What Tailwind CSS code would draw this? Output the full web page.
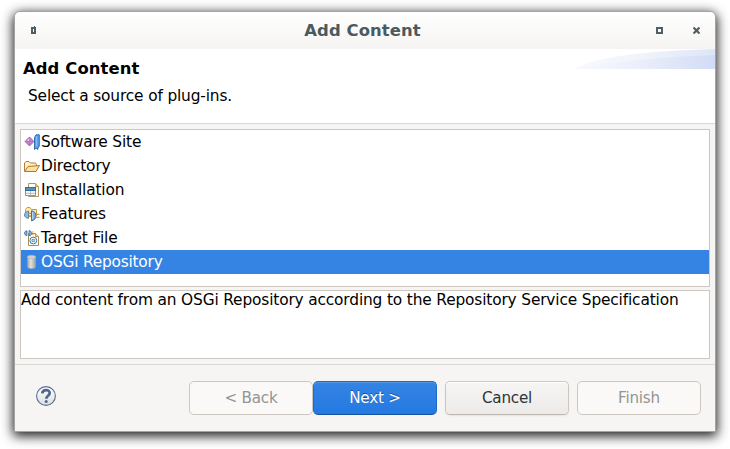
<!DOCTYPE html>
<html lang="en">
<head>
<meta charset="utf-8">
<title>Add Content</title>
<script src="https://cdn.jsdelivr.net/npm/@tailwindcss/browser@4"></script>
</head>
<body class="w-[730px] h-[449px] overflow-hidden bg-white pl-[14px] pt-[11px] font-['DejaVu_Sans',sans-serif] text-[15.4px] tracking-[-0.16px] text-black">
<main class="w-[702px] h-[421px] flex flex-col border border-[#a2a3a2] rounded-t-[6px] bg-[#f6f5f4] shadow-[0_3px_12px_1px_rgba(0,0,0,0.9)] overflow-hidden">
  <header class="h-[37px] shrink-0 flex items-center bg-linear-to-b from-white to-[#f5f4f2] text-[#4a5a60] px-[16px]">
    <svg class="w-[5px] h-[8px] -mt-px" viewBox="0 0 5 8" shape-rendering="crispEdges"><path fill="#505f66" fill-rule="evenodd" d="M3 0h1v1h1v7H0V1h3zM2 3v3h1V3z"/></svg>
    <h1 class="flex-1 text-center font-bold text-[16.4px] leading-[25px] tracking-[0.1px] pl-[33px]">Add Content</h1>
    <svg class="w-[7px] h-[7px] mr-[30px]" viewBox="0 0 7 7" shape-rendering="crispEdges"><path fill="#505f66" fill-rule="evenodd" d="M0 0h7v7H0zM2 2v3h3V2z"/></svg>
    <svg class="w-[7px] h-[7px] -mr-[1px]" viewBox="0 0 7 7"><path stroke="#505f66" stroke-width="2.2" d="M.5.5l6 6M6.5.5l-6 6"/></svg>
  </header>
  <section class="h-[75px] shrink-0 flex justify-between bg-white border-b border-[#dad8d5]">
    <div class="pl-[8px] pt-[10px]">
      <h2 class="font-bold text-[16.4px] tracking-[0.1px] leading-[20px]">Add Content</h2>
      <p class="pl-[5px] mt-[8px] leading-[19px]">Select a source of plug-ins.</p>
    </div>
    <svg class="w-[142px] h-[20px]" viewBox="0 0 142 20"><defs><linearGradient id="a"><stop stop-color="#f8faff"/><stop offset=".5" stop-color="#f0f3fb"/><stop offset="1" stop-color="#dce5f8"/></linearGradient><linearGradient id="b"><stop stop-color="#f8faff"/><stop offset=".45" stop-color="#eceffa"/><stop offset="1" stop-color="#d2dcf6"/></linearGradient></defs><path fill="url(#a)" d="M1 20C22 8 70 2 142 0v20z"/><path fill="url(#b)" d="M1 20C35 13 85 8 142 6v14z"/></svg>
  </section>
  <section class="h-[240px] shrink-0 px-[5px] pt-[5px] flex flex-col gap-[3px]">
    <ul class="h-[158px] border border-[#cdc7c2] bg-white leading-[24px]">
      <li class="h-6 flex items-center pl-[3px] gap-px"><svg class="w-4 h-4" viewBox="0 0 16 16"><path d="M1 7.5L5.5 3 10 7.5 5.5 12z" fill="#c684cc" stroke="#93529b" stroke-width=".8"/><path d="M3 6.5L5.5 4v3z" fill="#f4d8f5"/><path d="M5.5 3.5v8M2 7.5h7" stroke="#a866b1" stroke-width=".5"/><path d="M10.5 3.5L12 .8h3.3v11.2L14 14.2v1.2l-2-1.4-1.5 1.5z" fill="#56a2ec" stroke="#2563ab" stroke-width=".9"/><path d="M12.5 2v10" stroke="#83bff8"/></svg><span>Software Site</span></li>
      <li class="h-6 flex items-center pl-[3px] gap-px"><svg class="w-4 h-4" viewBox="0 0 16 16"><path d="M.5 13V5L2 3.5h3L6.5 5h5l1 1.5V8" fill="#fff1bd" stroke="#b47d3c"/><path d="M.5 13.5L4 8.5l11.5-1-3.5 6z" fill="#ffe1a0" stroke="#ad7434"/></svg><span>Directory</span></li>
      <li class="h-6 flex items-center pl-[3px] gap-px"><svg class="w-4 h-4" viewBox="0 0 16 16"><path d="M4.5 1.5h7l3 3v10h-10z" fill="#fffdf0" stroke="#a8986f"/><path d="M11.5 1.5v3h3" fill="#e8cd8b" stroke="#b79a60"/><path d="M1.5 5.5h10v8h-10z" fill="#fafcfc" stroke="#8393a0"/><path d="M1 5h11v4H1z" fill="#356f9e"/><path d="M2 7h9" stroke="#76b5df"/><path d="M2 11.3h9M6.5 9v4.5" stroke="#b1bcbc"/></svg><span>Installation</span></li>
      <li class="h-6 flex items-center pl-[3px] gap-px"><svg class="w-4 h-4" viewBox="0 0 16 16"><path d="M1.5 10V3.5L3 1.5h3l1.5 2h5v6z" fill="#ffe9aa" stroke="#c59a4c"/><path d="M4.5 5.2C2 5.5.5 7 .5 9s1.5 3 4 3.3z" fill="#8ebae0" stroke="#3d71a9" stroke-width=".8"/><path d="M4.5 7.3h3M4.5 10.3h3" stroke="#d19739" stroke-width="1.3"/><path d="M7.5 4.8v10c2.7-.3 4.5-2.4 4.5-5.1s-1.8-4.6-4.5-4.9z" fill="#78a9d9" stroke="#3567a2" stroke-width=".9"/><path d="M8.7 6v7" stroke="#c4e0f9"/><path d="M12 8.3h3.5M12 11.3h3.5" stroke="#d39a36" stroke-width="1.3"/></svg><span>Features</span></li>
      <li class="h-6 flex items-center pl-[3px] gap-px"><svg class="w-4 h-4" viewBox="0 0 16 16"><path d="M4.5 3.5h7l3 3v9h-10z" fill="#fffdf1" stroke="#a88e5b"/><path d="M11.5 3.5v3h3" fill="#edd7a0" stroke="#b79355"/><path d="M3 .8C1 1 .5 2 .5 3.2S1.5 5.5 3 5.7zM5 .5v5.3c2 0 2.7-1.2 2.7-2.6S6.5.8 5 .5z" fill="#80acda" stroke="#3d71a9" stroke-width=".8"/><path d="M7.5 2h2M7.5 4.3h2" stroke="#d19b3f"/><circle cx="9.3" cy="10.5" r="3.4" fill="#eff9ff" stroke="#3d79a9"/><circle cx="9.3" cy="10.5" r="1.7" fill="#337eb3"/><path d="M9.3 9v3M7.8 10.5h3" stroke="#b8e3f5" stroke-width=".7"/></svg><span>Target File</span></li>
      <li class="h-6 flex items-center pl-[3px] gap-px bg-[#3584e4] text-white"><svg class="w-4 h-4" viewBox="0 0 16 16"><defs><linearGradient id="c"><stop stop-color="#a2a2a2"/><stop offset=".4" stop-color="#e2e2e2"/><stop offset="1" stop-color="#a2a2a2"/></linearGradient></defs><path d="M3.5 3v10c0 2.2 8 2.2 8 0V3z" fill="url(#c)" stroke="#a5a5a5" stroke-width=".6"/><ellipse cx="7.5" cy="3" rx="4" ry="1.7" fill="#d2d2d2" stroke="#b5b5b5" stroke-width=".6"/></svg><span class="tracking-[-0.22px]">OSGi Repository</span></li>
    </ul>
    <div class="h-[69px] border border-[#cdc7c2] bg-white leading-[18px] whitespace-nowrap">Add content from an OSGi Repository according to the Repository Service Specification</div>
  </section>
  <footer class="flex-1 flex items-start border-t border-[#dad8d5] pt-[16px] pr-[14px] pl-[21px]">
    <svg class="w-5 h-5 mt-[5px]" viewBox="0 0 20 20"><defs><linearGradient id="d" x2="0" y2="1"><stop stop-color="#fff"/><stop offset="1" stop-color="#dcdedf"/></linearGradient></defs><circle cx="10" cy="10" r="9.4" fill="url(#d)" stroke="#5a6d94" stroke-width="1.1"/><path d="M6.3 7.4C6.5 3 13.7 3 13.7 7c0 2.8-3.4 2.7-3.4 5.8" fill="none" stroke="#50658e" stroke-width="2.7"/><circle cx="10.2" cy="15.6" r="1.5" fill="#50658e"/></svg>
    <div class="ml-auto flex text-[15.2px] tracking-[-0.24px]">
      <button class="w-[124px] h-[34px] pt-px border border-[#cdc7c2] rounded-[5px] bg-[#faf9f8] text-[#929595]">&lt; Back</button>
      <button class="w-[124px] h-[34px] pt-px border border-[#1b6acb] border-b-[#15539e] rounded-[5px] bg-linear-to-b from-[#3584e4] to-[#2379e2] text-white [text-shadow:0_-1px_rgba(0,0,0,.4)] shadow-[inset_0_1px_#5396e8]">Next &gt;</button>
      <button class="w-[124px] h-[34px] pt-px ml-2 border border-[#cdc7c2] border-b-[#bfb8b1] rounded-[5px] bg-linear-to-b from-[#f6f5f4] to-[#edebe9] text-[#2e3436] shadow-[inset_0_1px_#fff,0_1px_2px_rgba(0,0,0,.07)]">Cancel</button>
      <button class="w-[124px] h-[34px] pt-px ml-2 border border-[#cdc7c2] rounded-[5px] bg-[#faf9f8] text-[#929595]">Finish</button>
    </div>
  </footer>
</main>
</body>
</html>
